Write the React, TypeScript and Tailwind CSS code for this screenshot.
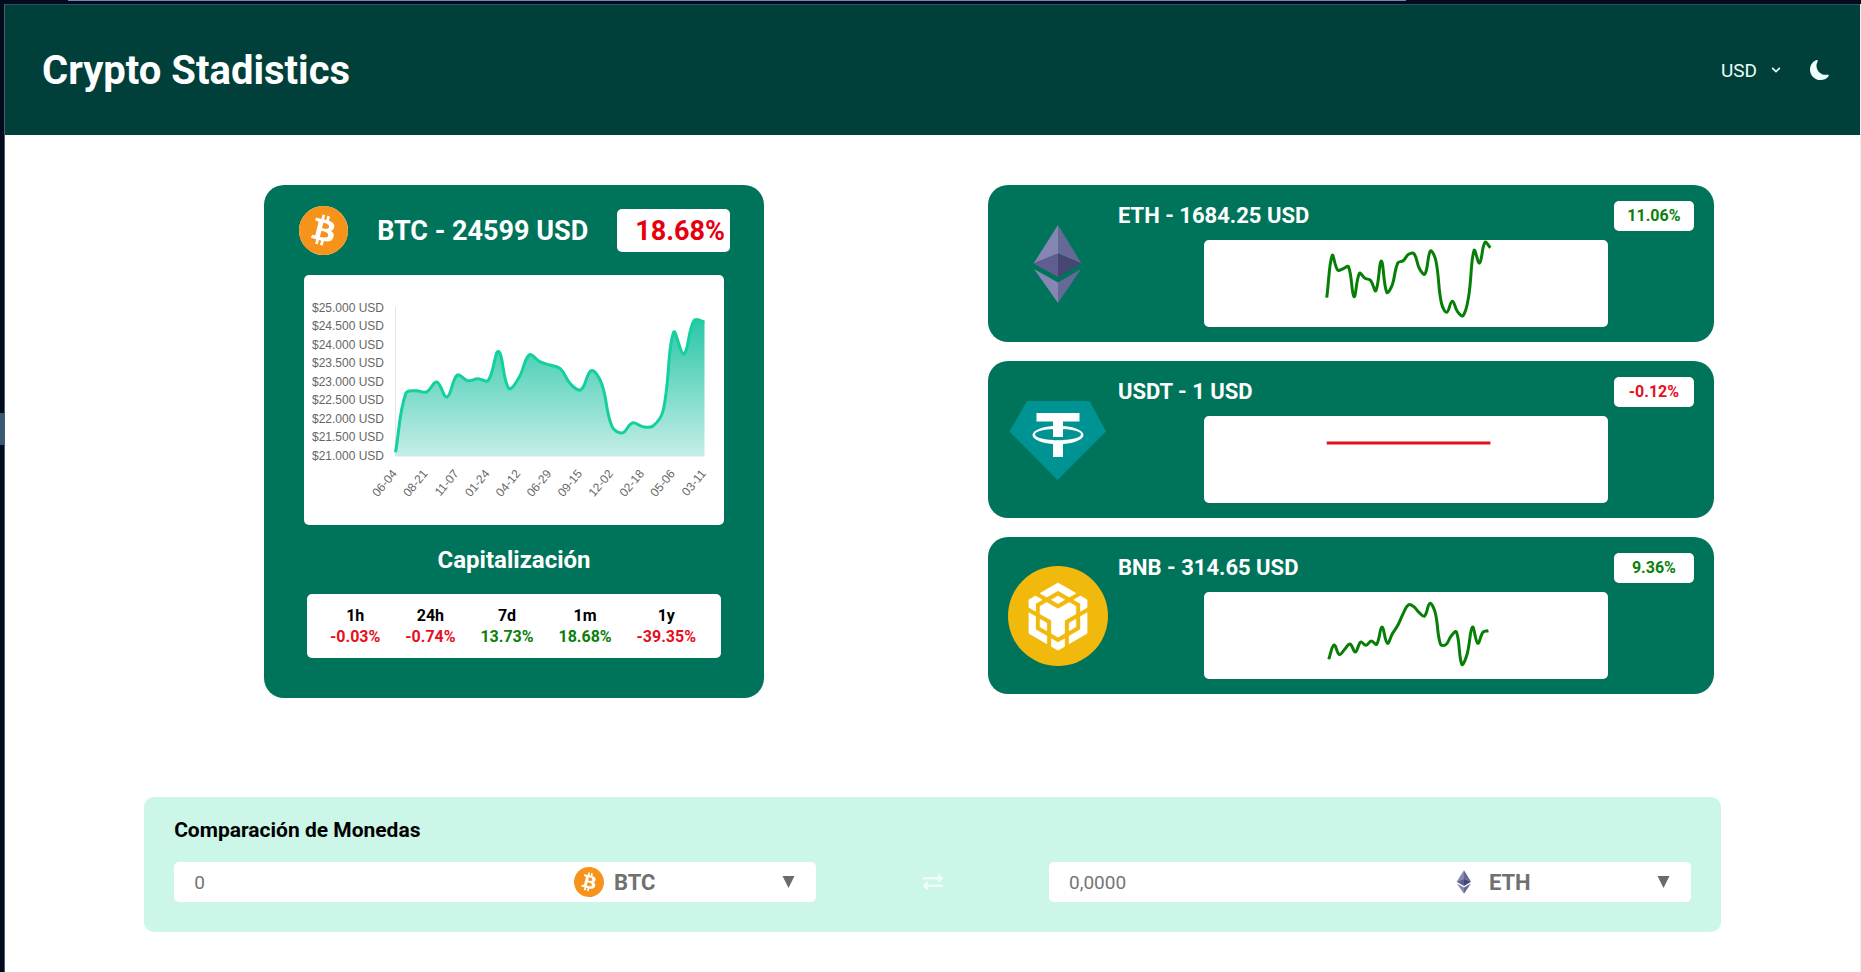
import { BsMoonFill } from "react-icons/bs";
import { FaExchangeAlt, FaChevronDown } from "react-icons/fa";
import { SiBitcoin } from "react-icons/si";

type Point = [number, number];

/** Builds a smooth path through the points with tension based control points. */
function smoothPath(points: Point[], tension = 0.4): string {
  const controls = points.map((cur, i) => {
    const prev = points[i - 1] ?? cur;
    const next = points[i + 1] ?? cur;
    const before = Math.hypot(cur[0] - prev[0], cur[1] - prev[1]);
    const after = Math.hypot(next[0] - cur[0], next[1] - cur[1]);
    const total = before + after || 1;
    const fa = (tension * before) / total;
    const fb = (tension * after) / total;
    const dx = next[0] - prev[0];
    const dy = next[1] - prev[1];
    return {
      inPoint: [cur[0] - fa * dx, cur[1] - fa * dy],
      outPoint: [cur[0] + fb * dx, cur[1] + fb * dy],
    };
  });
  return points.reduce((path, p, i) => {
    if (i === 0) return `M${p[0]},${p[1]}`;
    const a = controls[i - 1].outPoint;
    const b = controls[i].inPoint;
    return `${path}C${a[0].toFixed(2)},${a[1].toFixed(2)} ${b[0].toFixed(2)},${b[1].toFixed(2)} ${p[0]},${p[1]}`;
  }, "");
}

function spread(values: number[], from: number, to: number): Point[] {
  const step = (to - from) / (values.length - 1);
  return values.map((v, i) => [from + i * step, v]);
}

const btcSeries = [
  177.3, 118.3, 115.7, 117, 107, 122, 100, 105.7, 103.7, 105.5, 76.5, 113.3, 102.3, 79.7, 86.7, 90, 93.7, 109,
  114.7, 95.7, 108.3, 151, 158, 148, 151.7, 151, 135, 57.3, 79, 45.3, 47,
];
const ethSeries = [
  57.7, 15.3, 30, 28.7, 26.7, 56.7, 33.3, 38.3, 40.3, 50.7, 21, 52.3, 45, 23, 20.7, 14.3, 13.7, 28.7, 34, 11, 20.7,
  62.7, 72.3, 61.3, 72, 75.7, 56.7, 10.3, 23, 2.3, 7.7,
];
const usdtSeries = [27, 27];
const bnbSeries = [
  67.3, 53, 62.7, 57.3, 52, 60, 50, 53.3, 49, 52.3, 35, 51.3, 41.3, 33, 21.3, 12.7, 14.7, 20.7, 24, 11.3, 20.7, 52.3,
  52.7, 44, 40, 72.3, 62, 35, 51.3, 40, 38.7,
];

const priceLabels = ["25.000", "24.500", "24.000", "23.500", "23.000", "22.500", "22.000", "21.500", "21.000"];
const dateLabels = ["06-04", "08-21", "11-07", "01-24", "04-12", "06-29", "09-15", "12-02", "02-18", "05-06", "03-11"];

const changes = [
  { label: "1h", value: "-0.03%", up: false },
  { label: "24h", value: "-0.74%", up: false },
  { label: "7d", value: "13.73%", up: true },
  { label: "1m", value: "18.68%", up: true },
  { label: "1y", value: "-39.35%", up: false },
];

function BitcoinLogo({ className }: { className: string }) {
  return (
    <span className={`block shrink-0 rounded-full bg-white text-[#f7931a] ${className}`}>
      <SiBitcoin className="block size-full" aria-hidden="true" />
    </span>
  );
}

function EthereumLogo({ className }: { className: string }) {
  return (
    <svg viewBox="0 0 100 100" className={`block shrink-0 ${className}`} aria-hidden="true">
      <polygon points="50,11 25.5,49.5 50,39.5" fill="#8587b2" />
      <polygon points="50,11 73.5,49.5 50,39.5" fill="#666996" />
      <polygon points="25.5,49.5 50,39.5 50,63" fill="#5f5e90" />
      <polygon points="73.5,49.5 50,39.5 50,63" fill="#454672" />
      <polygon points="26,55 50,68.5 50,89" fill="#8587b2" />
      <polygon points="73,55 50,68.5 50,89" fill="#666996" />
    </svg>
  );
}

function TetherLogo({ className }: { className: string }) {
  return (
    <svg viewBox="0 0 100 100" className={`block shrink-0 ${className}`} aria-hidden="true">
      <polygon points="19,11 81.5,11 98,41.5 49.5,90 1.5,41.5" fill="#009393" />
      <rect x="28.5" y="23" width="43" height="8.5" fill="#fff" />
      <rect x="45" y="31" width="10" height="36" fill="#fff" />
      <path
        fillRule="evenodd"
        fill="#fff"
        d="M24.5 45a25.5 9.3 0 0 1 51 0a25.5 9.3 0 0 1-51 0zM27 44.5a23 5.6 0 0 0 46 0a23 5.6 0 0 0-46 0z"
      />
      <path d="M45 47h10v3.2h-10z" fill="#009393" />
    </svg>
  );
}

function BnbLogo({ className }: { className: string }) {
  return (
    <svg viewBox="0 0 100 100" className={`block shrink-0 ${className}`} aria-hidden="true">
      <circle cx="50" cy="50" r="50" fill="#f0b90b" />
      <g transform="translate(16.4 17) scale(2.8)" fill="#fff" stroke="#fff" strokeWidth="0.25">
        <path d="M5.631 3.676L12.001 0l6.367 3.676-2.34 1.358L12 2.716 7.972 5.034l-2.34-1.358zm12.737 4.636l-2.34-1.358L12 9.272 7.972 6.954l-2.34 1.358v2.716l4.026 2.318v4.636L12 19.341l2.341-1.359v-4.636l4.027-2.318V8.312zm0 7.352v-2.716l-2.34 1.358v2.716l2.34-1.358zm1.663.96l-4.027 2.318v2.717l6.368-3.677V10.63l-2.34 1.358v4.636zm-2.34-10.63l2.34 1.358v2.716l2.341-1.358V5.994l-2.34-1.358-2.342 1.358zM9.657 19.926v2.717L12 24l2.341-1.358v-2.717L12 21.284l-2.342-1.358zm-4.027-4.262l2.341 1.358v-2.716l-2.34-1.358v2.716zm4.027-9.67L12 7.352l2.341-1.358L12 4.636 9.658 5.994zm-5.69 1.358L6.31 5.994 3.968 4.636l-2.34 1.358V8.71l2.34 1.358V7.352zm0 4.636L1.627 10.63v7.353l6.37 3.677v-2.717l-4.028-2.318v-4.637z" />
      </g>
    </svg>
  );
}

function PriceChart() {
  const left = 91.5;
  const right = 400.5;
  const bottom = 181.5;
  const line = smoothPath(spread(btcSeries, left, right));
  return (
    <svg viewBox="0 0 420 250" className="block h-[250px] w-full" role="img" aria-label="BTC">
      <defs>
        <linearGradient id="btc-area" gradientUnits="userSpaceOnUse" x1="0" y1="32" x2="0" y2={bottom}>
          <stop offset="0" stopColor="#1cc3a2" />
          <stop offset="1" stopColor="#c5eee7" />
        </linearGradient>
      </defs>
      <line x1={left} x2={left} y1="32" y2={bottom} stroke="#e5e5e5" />
      <path d={`${line}L${right},${bottom}L${left},${bottom}Z`} fill="url(#btc-area)" />
      <path d={line} fill="none" stroke="#12d19c" strokeWidth="3" strokeLinejoin="round" />
      <g className="fill-[#666] font-['Liberation_Sans',Arial,sans-serif] text-[12px]">
        {priceLabels.map((label, i) => (
          <text key={label} x="80" y={36.5 + i * 18.5} textAnchor="end">
            ${label} USD
          </text>
        ))}
        {dateLabels.map((label, i) => (
          <text
            key={label}
            transform={`translate(${left + 2 + (i * (right - left)) / 10} 199) rotate(-50)`}
            textAnchor="end"
          >
            {label}
          </text>
        ))}
      </g>
    </svg>
  );
}

interface CoinCardProps {
  title: string;
  change: string;
  up: boolean;
  series: number[];
  from: number;
  to: number;
  logo: React.ReactNode;
}

function CoinCard({ title, change, up, series, from, to, logo }: CoinCardProps) {
  return (
    <article className="flex items-center gap-2.5 rounded-[20px] bg-[#00745b] px-5 pt-4 pb-[15px]">
      {logo}
      <div className="flex-1">
        <div className="flex items-center justify-between">
          <h2 className="text-[22px] leading-[30px] font-bold text-white">{title}</h2>
          <span
            className={`w-20 rounded-[5px] bg-white text-center text-base leading-[30px] font-bold ${up ? "text-[#0b800b]" : "text-[#e60f1e]"}`}
          >
            {change}
          </span>
        </div>
        <div className="mx-auto mt-[9px] w-[70%] rounded-[5px] bg-white">
          <svg viewBox="0 0 404 87" className="block h-[87px] w-full" role="img" aria-label={title}>
            <path
              d={smoothPath(spread(series, from, to))}
              fill="none"
              stroke={up ? "#077f07" : "#e60f1e"}
              strokeWidth="3"
              strokeLinejoin="round"
            />
          </svg>
        </div>
      </div>
    </article>
  );
}

interface CoinFieldProps {
  id: string;
  placeholder: string;
  coin: string;
  logo: React.ReactNode;
}

function CoinField({ id, placeholder, coin, logo }: CoinFieldProps) {
  return (
    <div className="flex h-10 flex-1 items-center overflow-hidden rounded-[5px] bg-white">
      <input
        id={id}
        aria-label={`Cantidad ${coin}`}
        placeholder={placeholder}
        className="h-10 min-w-0 flex-1 px-5 text-[19px] text-[#757575] outline-none placeholder:text-[#757575]"
      />
      <div className="flex w-[242px] items-center gap-2.5 pr-[21px]">
        {logo}
        <select
          aria-label={`Moneda ${coin}`}
          defaultValue={coin}
          className="flex-1 appearance-none bg-transparent text-[22px] font-bold text-[#707070] outline-none"
        >
          <option>BTC</option>
          <option>ETH</option>
        </select>
        <svg viewBox="0 0 13 12" className="h-3 w-[13px]" aria-hidden="true">
          <path d="M0.5 0h12L6.5 12z" fill="#6b6b6b" />
        </svg>
      </div>
    </div>
  );
}

export default function App() {
  return (
    <div className="flex min-h-screen flex-col bg-white font-[Roboto,sans-serif]">
      <div className="h-1 bg-[#020b1d]">
        <div className="mr-[455px] ml-[68px] h-px bg-[#7389b8]" />
      </div>
      <div className="flex flex-1">
        <div className="w-1 bg-[#020b1d] pt-[409px]">
          <div className="h-8 bg-[#3b5878]" />
        </div>
        <div className="flex-1 border-r border-l border-r-[#eef1f3] border-l-[#4a5e69]">
          <header className="flex h-[131px] items-center justify-between border-t border-[#2a5560] bg-[#003f3a] pr-[30px] pl-[37px]">
            <h1 className="pt-0.5 text-[40px] leading-[48px] font-bold text-white">Crypto Stadistics</h1>
            <div className="flex items-center gap-[29px] text-[#ebfffb]">
              <div className="relative flex items-center">
                <select
                  aria-label="Moneda"
                  defaultValue="USD"
                  className="w-[60px] appearance-none bg-transparent pt-0.5 text-[19px] outline-none"
                >
                  <option>USD</option>
                  <option>EUR</option>
                </select>
                <FaChevronDown className="pointer-events-none absolute right-0 size-2.5" aria-hidden="true" />
              </div>
              <button type="button" aria-label="Modo oscuro">
                <BsMoonFill className="size-5" />
              </button>
            </div>
          </header>

          <main>
            <section className="mx-auto grid w-[85%] grid-cols-2 gap-[97px] pt-[50px]">
              <article className="mx-auto w-[500px] rounded-[20px] bg-[#00745b] pt-5 pb-10">
                <div className="flex h-[50px] items-center justify-between pr-[34px] pl-[35px]">
                  <BitcoinLogo className="size-[49px]" />
                  <h2 className="pt-0.5 text-[27px] leading-[43px] font-bold text-white">BTC - 24599 USD</h2>
                  <span className="h-[43px] rounded-[5px] bg-white pr-[5px] pl-[18px] text-[27px] leading-[45px] font-bold text-[#e6000f]">
                    18.68%
                  </span>
                </div>
                <div className="mx-10 mt-5 rounded-[5px] bg-white">
                  <PriceChart />
                </div>
                <h3 className="mt-[21px] text-center text-2xl leading-[29px] font-bold text-white">Capitalización</h3>
                <dl className="mx-[43px] mt-[19px] flex h-16 items-center justify-between rounded-[5px] bg-white pr-[25px] pl-[23px] text-center text-base leading-[21px] font-bold">
                  {changes.map((c) => (
                    <div key={c.label}>
                      <dt className="text-black">{c.label}</dt>
                      <dd className={c.up ? "text-[#0b800b]" : "text-[#e60f1e]"}>{c.value}</dd>
                    </div>
                  ))}
                </dl>
              </article>

              <div className="flex w-full max-w-[726px] flex-col gap-[19px] justify-self-center">
                <CoinCard
                  title="ETH - 1684.25 USD"
                  change="11.06%"
                  up
                  series={ethSeries}
                  from={123}
                  to={287}
                  logo={<EthereumLogo className="size-[100px]" />}
                />
                <CoinCard
                  title="USDT - 1 USD"
                  change="-0.12%"
                  up={false}
                  series={usdtSeries}
                  from={123}
                  to={287}
                  logo={<TetherLogo className="size-[100px]" />}
                />
                <CoinCard
                  title="BNB - 314.65 USD"
                  change="9.36%"
                  up
                  series={bnbSeries}
                  from={125}
                  to={285}
                  logo={<BnbLogo className="size-[100px]" />}
                />
              </div>
            </section>

            <section className="mx-auto mt-[99px] w-[85%] rounded-[10px] bg-[#cbf6e8] px-[30px] pt-[21px] pb-[30px]">
              <h2 className="text-[21px] leading-6 font-bold text-black">Comparación de Monedas</h2>
              <div className="mt-5 flex items-center">
                <CoinField
                  id="from-amount"
                  placeholder="0"
                  coin="BTC"
                  logo={<BitcoinLogo className="size-[30px]" />}
                />
                <button
                  type="button"
                  aria-label="Intercambiar monedas"
                  className="flex w-[233px] justify-center text-[#effdf9]"
                >
                  <FaExchangeAlt className="size-5" />
                </button>
                <CoinField
                  id="to-amount"
                  placeholder="0,0000"
                  coin="ETH"
                  logo={<EthereumLogo className="size-[30px]" />}
                />
              </div>
            </section>
          </main>
        </div>
      </div>
    </div>
  );
}
